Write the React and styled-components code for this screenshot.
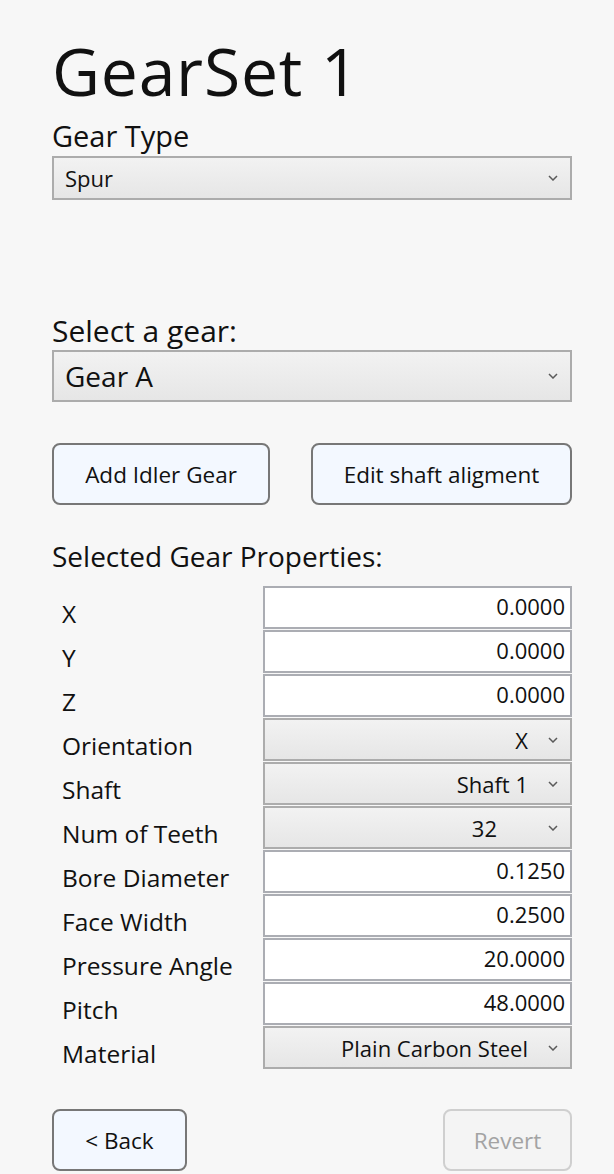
import React from 'react';
import styled, { createGlobalStyle } from 'styled-components';

const GlobalStyle = createGlobalStyle`
    html, body {
        margin: 0;
        padding: 0;
        background: #f7f7f7;
    }
    body {
        font-family: "Open Sans", "Noto Sans", sans-serif;
        color: #111;
    }
`;

const Page = styled.div`
    width: 520px;
    padding: 35px 0 0 52px;
    display: flex;
    flex-direction: column;
`;

const Title = styled.h1`
    margin: 0;
    font-size: 66px;
    font-weight: 400;
    line-height: 70px;
    letter-spacing: 0.8px;
`;

const FieldLabel = styled.div`
    font-size: ${p => p.size}px;
    line-height: 34px;
    margin-top: ${p => p.top || 0}px;
    white-space: nowrap;
`;

const ComboBox = styled.div`
    box-sizing: border-box;
    height: ${p => p.height}px;
    margin-top: ${p => p.gap}px;
    display: flex;
    align-items: center;
    justify-content: space-between;
    padding: 0 12px 0 11px;
    border: 2px solid #acacac;
    background: linear-gradient(#f2f2f2, #e6e6e6);
    font-size: ${p => p.size}px;
`;

const Chevron = () => (
    <svg width="10" height="6" viewBox="0 0 10 6">
        <path d="M1 1 L5 5 L9 1" fill="none" stroke="#5a5a5a" strokeWidth="1.5" />
    </svg>
);

const ButtonRow = styled.div`
    display: flex;
    justify-content: space-between;
    margin-top: ${p => p.top}px;
`;

const Button = styled.button`
    box-sizing: border-box;
    width: ${p => p.width}px;
    height: 62px;
    border-radius: 8px;
    border: 2px solid ${p => (p.disabled ? '#cfcfcf' : '#777')};
    background: ${p => (p.disabled ? '#f4f4f4' : '#f3f8ff')};
    color: ${p => (p.disabled ? '#a3a3a3' : '#111')};
    font-family: inherit;
    font-size: 22.5px;
    padding: 0;
    cursor: ${p => (p.disabled ? 'default' : 'pointer')};
`;

const PropGrid = styled.div`
    display: grid;
    grid-template-columns: 211px 309px;
    grid-auto-rows: 43px;
    row-gap: 1px;
    margin-top: 13px;
`;

const PropLabel = styled.div`
    padding: 13px 0 0 10px;
    font-size: 24.5px;
    line-height: 30px;
    white-space: nowrap;
`;

const ValueBox = styled.div`
    box-sizing: border-box;
    border: 2px solid #abadb3;
    background: #fff;
    font-size: 22px;
    line-height: 30px;
    text-align: right;
    padding: 3px 5px 0 0;
`;

const ValueCombo = styled.div`
    box-sizing: border-box;
    border: 2px solid #acacac;
    background: linear-gradient(#f2f2f2, #e6e6e6);
    display: flex;
    align-items: center;
    justify-content: flex-end;
    gap: 20px;
    padding-right: 12px;
    font-size: 22px;

    span {
        padding-right: ${p => p.extra || 0}px;
    }
`;

const properties = [
    { label: 'X', value: '0.0000' },
    { label: 'Y', value: '0.0000' },
    { label: 'Z', value: '0.0000' },
    { label: 'Orientation', value: 'X', combo: true },
    { label: 'Shaft', value: 'Shaft 1', combo: true },
    { label: 'Num of Teeth', value: '32', combo: true, extra: 31 },
    { label: 'Bore Diameter', value: '0.1250' },
    { label: 'Face Width', value: '0.2500' },
    { label: 'Pressure Angle', value: '20.0000' },
    { label: 'Pitch', value: '48.0000' },
    { label: 'Material', value: 'Plain Carbon Steel', combo: true },
];

export default function App() {
    return (
        <>
            <GlobalStyle />
            <Page>
                <Title>GearSet 1</Title>
                <FieldLabel top={14} size={29}>Gear Type</FieldLabel>
                <ComboBox gap={3} height={44} size={22}>
                    <span>Spur</span>
                    <Chevron />
                </ComboBox>

                <FieldLabel top={114} size={30}>Select a gear:</FieldLabel>
                <ComboBox gap={2} height={52} size={28}>
                    <span>Gear A</span>
                    <Chevron />
                </ComboBox>

                <ButtonRow top={41}>
                    <Button width={218}>Add Idler Gear</Button>
                    <Button width={261}>Edit shaft aligment</Button>
                </ButtonRow>

                <FieldLabel top={34} size={28}>Selected Gear Properties:</FieldLabel>
                <PropGrid>
                    {properties.map(p => (
                        <React.Fragment key={p.label}>
                            <PropLabel>{p.label}</PropLabel>
                            {p.combo ? (
                                <ValueCombo extra={p.extra}>
                                    <span>{p.value}</span>
                                    <Chevron />
                                </ValueCombo>
                            ) : (
                                <ValueBox>{p.value}</ValueBox>
                            )}
                        </React.Fragment>
                    ))}
                </PropGrid>

                <ButtonRow top={40}>
                    <Button width={135}>&lt; Back</Button>
                    <Button width={129} disabled>Revert</Button>
                </ButtonRow>
            </Page>
        </>
    );
}
